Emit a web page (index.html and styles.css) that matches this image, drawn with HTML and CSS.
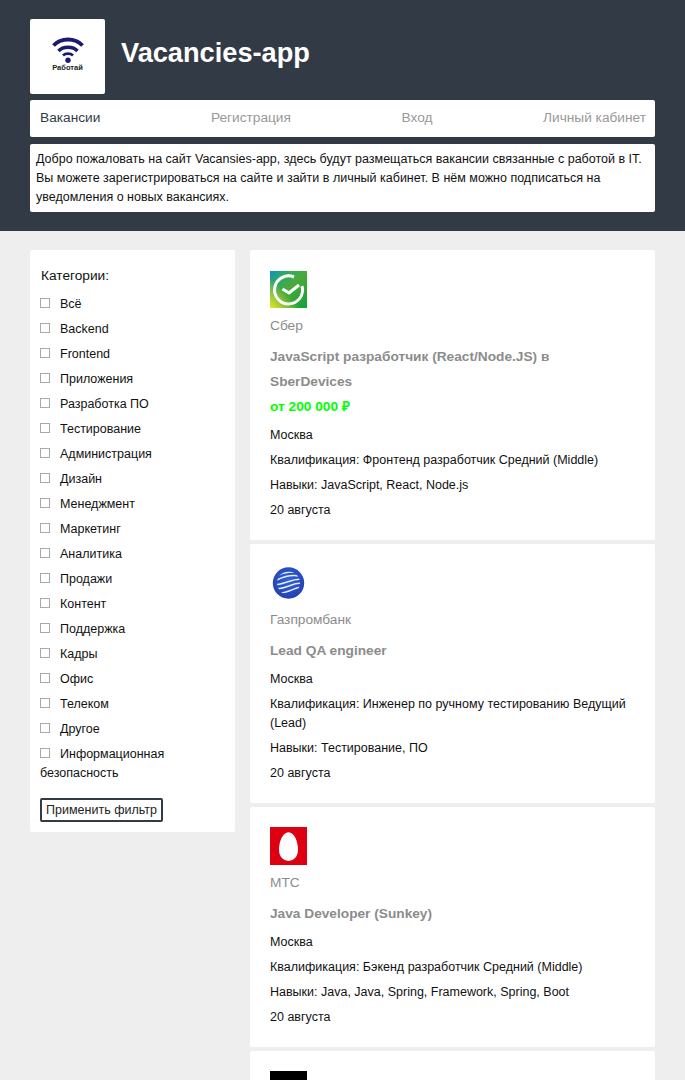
FILE: index.html
```html
<!DOCTYPE html>
<html lang="ru">
<head>
<meta charset="utf-8">
<title>Vacancies-app</title>
<link rel="stylesheet" href="styles.css">
</head>
<body>
<header class="header">
  <div class="brand">
    <div class="logo">
      <svg class="wifi" viewBox="0 0 32 26" aria-hidden="true">
        <path d="M1.500 8.500 C9 0.500 23 0.500 30.500 8.500" fill="none" stroke="#1a1a72" stroke-width="3.800"/>
        <path d="M6.500 14 C11 9 21 9 25.500 14" fill="none" stroke="#1a1a72" stroke-width="3.400"/>
        <path d="M11 18.500 C13.500 16 18.500 16 21 18.500" fill="none" stroke="#1a1a72" stroke-width="2.600"/>
        <circle cx="16" cy="23.200" r="2.700" fill="#1a1a72"/>
      </svg>
      <span class="logo-text">Работай</span>
    </div>
    <h1 class="title">Vacancies-app</h1>
  </div>
  <nav class="nav">
    <a class="nav-link active">Вакансии</a>
    <a class="nav-link">Регистрация</a>
    <a class="nav-link">Вход</a>
    <a class="nav-link">Личный кабинет</a>
  </nav>
  <p class="intro">Добро пожаловать на сайт Vacansies-app, здесь будут размещаться вакансии связанные с работой в IT. Вы можете зарегистрироваться на сайте и зайти в личный кабинет. В нём можно подписаться на уведомления о новых вакансиях.</p>
</header>
<main class="main">
  <aside class="filter">
    <div class="filter-title">Категории:</div>
    <label class="cat"><span class="box"></span>Всё</label>
    <label class="cat"><span class="box"></span>Backend</label>
    <label class="cat"><span class="box"></span>Frontend</label>
    <label class="cat"><span class="box"></span>Приложения</label>
    <label class="cat"><span class="box"></span>Разработка ПО</label>
    <label class="cat"><span class="box"></span>Тестирование</label>
    <label class="cat"><span class="box"></span>Администрация</label>
    <label class="cat"><span class="box"></span>Дизайн</label>
    <label class="cat"><span class="box"></span>Менеджмент</label>
    <label class="cat"><span class="box"></span>Маркетинг</label>
    <label class="cat"><span class="box"></span>Аналитика</label>
    <label class="cat"><span class="box"></span>Продажи</label>
    <label class="cat"><span class="box"></span>Контент</label>
    <label class="cat"><span class="box"></span>Поддержка</label>
    <label class="cat"><span class="box"></span>Кадры</label>
    <label class="cat"><span class="box"></span>Офис</label>
    <label class="cat"><span class="box"></span>Телеком</label>
    <label class="cat"><span class="box"></span>Другое</label>
    <label class="cat wrap"><span class="box"></span>Информационная безопасность</label>
    <button class="apply" type="button">Применить фильтр</button>
  </aside>
  <section class="list">
    <article class="card">
      <svg class="co-logo" viewBox="0 0 37 37" aria-hidden="true">
        <defs>
          <linearGradient id="sber" x1="0" y1="0" x2="1" y2="1">
            <stop offset="0" stop-color="#0a8fd0"/>
            <stop offset="0.2" stop-color="#2aa86a"/>
            <stop offset="0.5" stop-color="#4aaa3a"/>
            <stop offset="1" stop-color="#12a03c"/>
          </linearGradient>
          <linearGradient id="sberY" x1="0" y1="1" x2="0.7" y2="0.3">
            <stop offset="0" stop-color="#e9e52c"/>
            <stop offset="0.6" stop-color="#e9e52c" stop-opacity="0"/>
          </linearGradient>
        </defs>
        <rect width="37" height="37" fill="url(#sber)"/>
        <rect width="37" height="37" fill="url(#sberY)"/>
        <path d="M24 6 A14 14 0 1 0 32 15" fill="none" stroke="#fff" stroke-width="3"/>
        <path d="M12.500 18 L19 22 L29 14" fill="none" stroke="#fff" stroke-width="3"/>
      </svg>
      <div class="company">Сбер</div>
      <h2 class="job">JavaScript разработчик (React/Node.JS) в SberDevices</h2>
      <div class="salary">от 200 000 ₽</div>
      <div class="city">Москва</div>
      <div class="row">Квалификация: Фронтенд разработчик Средний (Middle)</div>
      <div class="row">Навыки: JavaScript, React, Node.js</div>
      <div class="row">20 августа</div>
    </article>
    <article class="card">
      <svg class="co-logo" viewBox="0 0 37 37" aria-hidden="true">
        <defs>
          <radialGradient id="gpb" cx="0.5" cy="0.4" r="0.6">
            <stop offset="0" stop-color="#2f62d8"/>
            <stop offset="1" stop-color="#2540b0"/>
          </radialGradient>
          <clipPath id="gpbClip"><circle cx="18.500" cy="18.500" r="11.500"/></clipPath>
        </defs>
        <circle cx="18.500" cy="18.500" r="15.700" fill="url(#gpb)"/>
        <g clip-path="url(#gpbClip)" fill="none" stroke="#e4ecfb" stroke-width="1.500">
          <path d="M6 12 C14 7 22 7 32 8"/>
          <path d="M6 16 C15 11 24 10 32 12"/>
          <path d="M6 20 C15 20 24 13 32 15"/>
          <path d="M6 24 C16 25 24 17 32 19"/>
          <path d="M8 28 C18 30 26 21 32 23"/>
        </g>
      </svg>
      <div class="company">Газпромбанк</div>
      <h2 class="job">Lead QA engineer</h2>
      <div class="city">Москва</div>
      <div class="row wrapped">Квалификация: Инженер по ручному тестированию Ведущий (Lead)</div>
      <div class="row">Навыки: Тестирование, ПО</div>
      <div class="row">20 августа</div>
    </article>
    <article class="card">
      <svg class="co-logo" viewBox="0 0 37 37" preserveAspectRatio="none" aria-hidden="true">
        <rect width="37" height="37" fill="#dc0010"/>
        <path d="M18.500 5 C24.500 5 28 14.500 28 22 C28 29 24 33 18.500 33 C13 33 9 29 9 22 C9 14.500 12.500 5 18.500 5 Z" fill="#fff"/>
      </svg>
      <div class="company">МТС</div>
      <h2 class="job">Java Developer (Sunkey)</h2>
      <div class="city">Москва</div>
      <div class="row">Квалификация: Бэкенд разработчик Средний (Middle)</div>
      <div class="row">Навыки: Java, Java, Spring, Framework, Spring, Boot</div>
      <div class="row">20 августа</div>
    </article>
    <article class="card">
      <div class="co-logo black"></div>
    </article>
  </section>
</main>
</body>
</html>
```
FILE: styles.css
```css
* { box-sizing: border-box; }
html, body {
  margin: 0;
  height: 1080px;
  overflow: hidden;
}
body {
  background: #eee;
  color: #111;
  font-family: "Liberation Sans", Arial, sans-serif;
  font-size: 12.5px;
  line-height: 19px;
}
.header {
  background: #323b45;
  height: 231px;
  padding: 19px 30px 0;
}
.brand {
  display: flex;
  align-items: center;
  gap: 16px;
}
.logo {
  width: 75px;
  height: 75px;
  background: #fff;
  border-radius: 2px;
  display: flex;
  flex-direction: column;
  align-items: center;
  padding-top: 18px;
}
.wifi { display: block; width: 32px; height: 26px; }
.logo-text {
  font-size: 7.500px;
  font-weight: 700;
  line-height: 9px;
  color: #222;
}
.title {
  margin: 0 0 8px;
  color: #fff;
  font-size: 27.200px;
  line-height: 32px;
  font-weight: 700;
}
.nav {
  margin-top: 6px;
  height: 37px;
  background: #fff;
  border-radius: 2px;
  display: flex;
  justify-content: space-between;
  align-items: center;
  padding: 0 9px 2px 10px;
  font-size: 13.700px;
}
.nav-link { color: #999; }
.nav-link.active { color: #323b45; }
.intro {
  margin: 7px 0 0;
  background: #fff;
  border-radius: 2px;
  padding: 6px 6px 4px;
  height: 68px;
  color: #111;
}
.main {
  display: flex;
  align-items: flex-start;
  gap: 15px;
  padding: 19px 30px 0;
}
.filter {
  width: 205px;
  flex: none;
  background: #fff;
  border-radius: 2px;
  padding: 16px 10px 10px;
}
.filter-title { margin-bottom: 7px; margin-left: 1px; font-size: 13.700px; }
.cat { display: block; height: 25px; padding-top: 3px; }
.cat.wrap { height: auto; }
.box {
  display: inline-block;
  width: 10px;
  height: 10px;
  border: 1px solid #a9a9a9;
  margin-right: 10px;
  vertical-align: 0;
}
.apply {
  display: block;
  margin-top: 15px;
  width: 123px;
  height: 24px;
  padding: 0;
  background: #fff;
  border: 2px solid #323b45;
  border-radius: 2px;
  color: #222;
  font: inherit;
  line-height: 20px;
}
.list {
  flex: 1;
  display: flex;
  flex-direction: column;
  gap: 4px;
}
.card {
  background: #fff;
  border-radius: 2px;
  padding: 21px 20px 17px;
}
.card + .card { padding-top: 20px; }
.co-logo { display: block; width: 37px; height: 37px; }
.card + .card .co-logo { height: 38px; }
.co-logo.black { background: #000; }
.company { color: #8c8c8c; margin-top: 8px; line-height: 20px; font-size: 13.700px; }
.job {
  margin: 8px 0 0;
  font-size: 13.700px;
  line-height: 25px;
  color: #8c8c8c;
  font-weight: 700;
}
.salary {
  color: #0f0;
  font-weight: 700;
  font-size: 13.700px;
  line-height: 25px;
}
.city { margin-top: 4px; line-height: 25px; }
.row { line-height: 25px; }
.row.wrapped { line-height: 19px; padding: 3px 0; }
```
